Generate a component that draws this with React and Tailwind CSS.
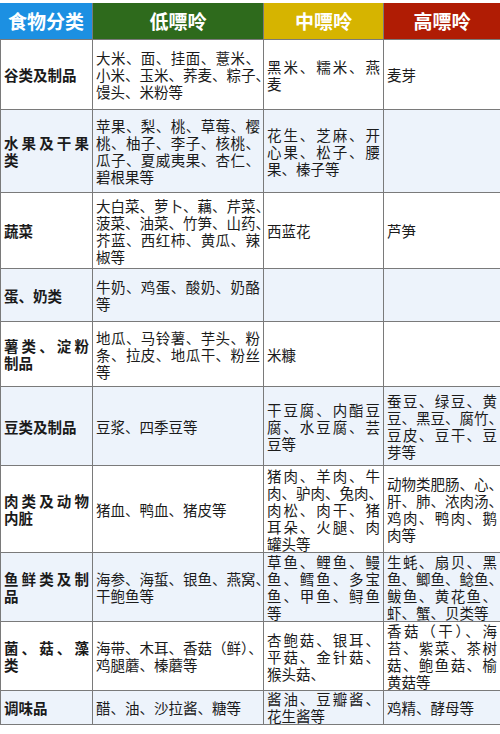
const rows = [
  {
    h: "h-[70px]",
    alt: false,
    cells: [
      ["谷类及制品"],
      ["大米、面、挂面、薏米、", "小米、玉米、荞麦、粽子、", "馒头、米粉等"],
      ["黑米、糯米、燕", "麦"],
      ["麦芽"],
    ],
  },
  {
    h: "h-[83px]",
    alt: true,
    cells: [
      ["水果及干果", "类"],
      ["苹果、梨、桃、草莓、樱", "桃、柚子、李子、核桃、", "瓜子、夏威夷果、杏仁、", "碧根果等"],
      ["花生、芝麻、开", "心果、松子、腰", "果、榛子等"],
      [],
    ],
  },
  {
    h: "h-[76px]",
    alt: false,
    cells: [
      ["蔬菜"],
      ["大白菜、萝卜、藕、芹菜、", "菠菜、油菜、竹笋、山药、", "芥蓝、西红柿、黄瓜、辣", "椒等"],
      ["西蓝花"],
      ["芦笋"],
    ],
  },
  {
    h: "h-[53px]",
    alt: true,
    cells: [["蛋、奶类"], ["牛奶、鸡蛋、酸奶、奶酪", "等"], [], []],
  },
  {
    h: "h-[65px]",
    alt: false,
    cells: [
      ["薯类、淀粉", "制品"],
      ["地瓜、马铃薯、芋头、粉", "条、拉皮、地瓜干、粉丝", "等"],
      ["米糠"],
      [],
    ],
  },
  {
    h: "h-[79px]",
    alt: true,
    cells: [
      ["豆类及制品"],
      ["豆浆、四季豆等"],
      ["干豆腐、内酯豆", "腐、水豆腐、芸", "豆等"],
      ["蚕豆、绿豆、黄", "豆、黑豆、腐竹、", "豆皮、豆干、豆", "芽等"],
    ],
  },
  {
    h: "h-[87px]",
    alt: false,
    cells: [
      ["肉类及动物", "内脏"],
      ["猪血、鸭血、猪皮等"],
      ["猪肉、羊肉、牛", "肉、驴肉、兔肉、", "肉松、肉干、猪", "耳朵、火腿、肉", "罐头等"],
      ["动物类肥肠、心、", "肝、肺、浓肉汤、", "鸡肉、鸭肉、鹅", "肉等"],
    ],
  },
  {
    h: "h-[69px]",
    alt: true,
    cells: [
      ["鱼鲜类及制", "品"],
      ["海参、海蜇、银鱼、燕窝、", "干鲍鱼等"],
      ["草鱼、鲤鱼、鳗", "鱼、鳕鱼、多宝", "鱼、甲鱼、鲟鱼", "等"],
      ["生蚝、扇贝、黑", "鱼、鲫鱼、鲶鱼、", "鲅鱼、黄花鱼、", "虾、蟹、贝类等"],
    ],
  },
  {
    h: "h-[68px]",
    alt: false,
    cells: [
      ["菌、菇、藻", "类"],
      ["海带、木耳、香菇（鲜）、", "鸡腿蘑、榛蘑等"],
      ["杏鲍菇、银耳、", "平菇、金针菇、", "猴头菇、"],
      ["香菇（干）、海", "苔、紫菜、茶树", "菇、鲍鱼菇、榆", "黄菇等"],
    ],
  },
  {
    h: "h-[35px]",
    alt: true,
    cells: [["调味品"], ["醋、油、沙拉酱、糖等"], ["酱油、豆瓣酱、", "花生酱等"], ["鸡精、酵母等"]],
  },
];

const headers = [
  { label: "食物分类", bg: "bg-[#1c90e2]" },
  { label: "低嘌呤", bg: "bg-[#2e6a1c]" },
  { label: "中嘌呤", bg: "bg-[#d6b400]" },
  { label: "高嘌呤", bg: "bg-[#b01c04]" },
];

const Cell = ({ lines, first, last }) => (
  <div
    className={`flex flex-col justify-center px-[3px] border-b border-[#7a7a7a] ${
      last ? "" : "border-r"
    } ${first ? "font-bold text-[14.5px] border-l" : "text-[14.5px]"}`}
  >
    {lines.map((line, i) => (
      <div
        key={i}
        className={`whitespace-nowrap leading-[17px] ${
          i < lines.length - 1 ? "text-justify [text-align-last:justify]" : "text-left"
        }`}
      >
        {line}
      </div>
    ))}
  </div>
);

const App = () => {
  return (
    <div
      className="w-[500px] h-[734px] bg-white pt-[3px] overflow-hidden text-[#1b1b1b]"
      style={{ fontFamily: '"Noto Sans CJK SC", "Noto Sans", sans-serif' }}
    >
      <div className="grid grid-cols-[93px_171px_120px_116px] h-[37px] border-b border-[#7a7a7a]">
        {headers.map((h, i) => (
          <div
            key={h.label}
            className={`${h.bg} flex items-center justify-center text-white font-bold text-[19px] ${
              i < 3 ? "border-r border-[#7a7a7a]" : ""
            }`}
          >
            {h.label}
          </div>
        ))}
      </div>
      {rows.map((row, r) => (
        <div
          key={r}
          className={`grid grid-cols-[93px_171px_120px_116px] ${row.h} ${
            row.alt ? "bg-[#edf3fb]" : "bg-white"
          }`}
        >
          {row.cells.map((lines, c) => (
            <Cell key={c} lines={lines} first={c === 0} last={c === 3} />
          ))}
        </div>
      ))}
    </div>
  );
};

export default App;
